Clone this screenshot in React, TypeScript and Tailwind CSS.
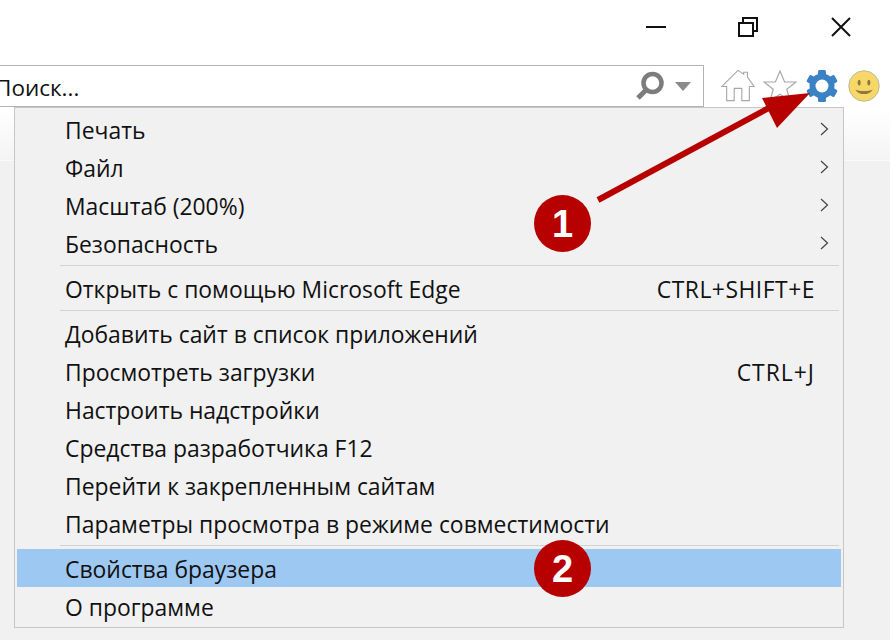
import React from "react";

const F = "[font-family:'Open_Sans','Noto_Sans',sans-serif]";

function Chevron() {
  return (
    <svg width="9" height="14" viewBox="0 0 9 14" className="shrink-0">
      <path d="M1 1l6.5 6L1 13" fill="none" stroke="#444" strokeWidth="1.2" />
    </svg>
  );
}

function Item({ label, right, wide, arrow, active }: { label: string; right?: string; wide?: boolean; arrow?: boolean; active?: boolean }) {
  return (
    <div className={"h-[38px] flex items-center justify-between pl-[48px] " + (active ? "bg-[#9dc8f1] pr-[27px]" : arrow ? "pr-[12px]" : "pr-[26px]")}>
      <span className="text-[22.9px] leading-none text-[#111] mt-[4px]">{label}</span>
      {right && <span className={"text-[22.9px] leading-none text-[#111] mt-[4px] " + (wide ? "tracking-[1px]" : "tracking-[0.5px]")}>{right}</span>}
      {arrow && <Chevron />}
    </div>
  );
}

function Sep() {
  return <div className="h-[7px] flex items-center pl-[43px] pr-[2px]"><div className="h-[1px] w-full bg-[#d2d2d2]" /></div>;
}

function Badge({ n }: { n: string }) {
  return (
    <div className="w-[57px] h-[57px] rounded-full bg-[#b70000] flex items-center justify-center text-white font-bold text-[38px] leading-none [font-family:'Liberation_Sans',sans-serif]">{n}</div>
  );
}

export default function App() {
  return (
    <div className={"w-[890px] h-[640px] relative overflow-hidden flex flex-col bg-white " + F}>
      <div className="h-[54px] flex items-center justify-end shrink-0">
        <div className="flex items-center">
          <svg width="22" height="22" viewBox="0 0 22 22" className="mr-[70px]"><path d="M1 11h20" stroke="#111" strokeWidth="2" /></svg>
          <svg width="22" height="22" viewBox="0 0 22 22" className="mr-[71px]"><path d="M2 7h14v13H2zM6 6V2h14v13h-3" fill="none" stroke="#111" strokeWidth="2" /></svg>
          <svg width="22" height="22" viewBox="0 0 22 22" className="mr-[38px]"><path d="M2 2l18 18M20 2L2 20" stroke="#111" strokeWidth="2" /></svg>
        </div>
      </div>
      <div className="h-[54px] flex items-start shrink-0 pt-[11px]">
        <div className="w-[704px] h-[42px] border border-l-0 border-[#b4b4b4] flex items-center justify-between pr-[12px]">
          <span className="text-[22.5px] leading-none text-[#111] ml-[-5px] mt-[5px]">Поиск...</span>
          <div className="flex items-center gap-[11px]">
            <svg width="28" height="30" viewBox="0 0 28 30">
              <circle cx="16.5" cy="12" r="9" fill="none" stroke="#7c7c7c" strokeWidth="4.5" />
              <path d="M10 19L2 27" stroke="#7c7c7c" strokeWidth="5" />
            </svg>
            <svg width="16" height="9" viewBox="0 0 16 9"><path d="M0 0h16L8 9z" fill="#8a8a8a" /></svg>
          </div>
        </div>
        <div className="flex items-center ml-[17px] mt-[4px]">
          <svg width="34" height="33" viewBox="0 0 36 34">
            <path d="M18 1L1 18h5v15h8V20h8v13h8V18h5L28 8V3h-4v2z" fill="#fff" stroke="#a8a8a8" strokeWidth="1.2" />
          </svg>
          <svg width="34" height="32" viewBox="0 0 34 32" className="ml-[8px]">
            <path d="M17 1l4.6 11H33l-9.2 7.2L27 31l-10-6.8L7 31l3.2-11.8L1 12h11.4z" fill="#fff" stroke="#a8a8a8" strokeWidth="1.2" />
          </svg>
          <svg width="32" height="32" viewBox="0 0 32 32" className="ml-[9px]">
            <g fill="#3b82c4">
              <circle cx="16" cy="16" r="12.5" />
              <rect x="12" y="0" width="8" height="32" rx="1.5" />
              <rect x="12" y="0" width="8" height="32" rx="1.5" transform="rotate(60 16 16)" />
              <rect x="12" y="0" width="8" height="32" rx="1.5" transform="rotate(120 16 16)" />
            </g>
            <circle cx="16" cy="16" r="6.5" fill="#fff" />
          </svg>
          <svg width="32" height="32" viewBox="0 0 33 33" className="ml-[10px]">
            <circle cx="16.5" cy="16.5" r="15.7" fill="#f7d768" stroke="#b8b8a0" strokeWidth="1" />
            <ellipse cx="11.5" cy="13" rx="1.6" ry="3" fill="#8c7a3c" />
            <ellipse cx="21.5" cy="13" rx="1.6" ry="3" fill="#8c7a3c" />
            <path d="M7.5 20c3 6.5 15 6.5 18 0-4 2.2-14 2.2-18 0z" fill="#8c7a3c" />
          </svg>
        </div>
      </div>
      <div className="flex-1 bg-[#f1f1f1] relative">
        <div className="h-[52px] bg-gradient-to-b from-white to-[#f4f4f4]" />
        <div className="h-[1px] bg-[#fafafa]" />
      </div>

      <div className="absolute left-[14px] top-[107px] w-[830px] h-[521px] bg-[#f1f1f1] border border-[#c6c6c6] px-[2px] pt-[2px]">
        <Item label="Печать" arrow />
        <Item label="Файл" arrow />
        <Item label="Масштаб (200%)" arrow />
        <Item label="Безопасность" arrow />
        <Sep />
        <Item label="Открыть с помощью Microsoft Edge" right="CTRL+SHIFT+E" />
        <Sep />
        <Item label="Добавить сайт в список приложений" />
        <Item label="Просмотреть загрузки" right="CTRL+J" wide />
        <Item label="Настроить надстройки" />
        <Item label="Средства разработчика F12" />
        <Item label="Перейти к закрепленным сайтам" />
        <Item label="Параметры просмотра в режиме совместимости" />
        <Sep />
        <Item label="Свойства браузера" active />
        <Item label="О программе" />
      </div>

      <svg width="890" height="640" viewBox="0 0 890 640" className="absolute left-0 top-0 pointer-events-none">
        <path d="M598 200L778 103" stroke="#b70000" strokeWidth="6" fill="none" />
        <path d="M810 93L762 98L777 128z" fill="#b70000" />
      </svg>
      <div className="absolute left-[534px] top-[195px]"><Badge n="1" /></div>
      <div className="absolute left-[534px] top-[540px]"><Badge n="2" /></div>
    </div>
  );
}
